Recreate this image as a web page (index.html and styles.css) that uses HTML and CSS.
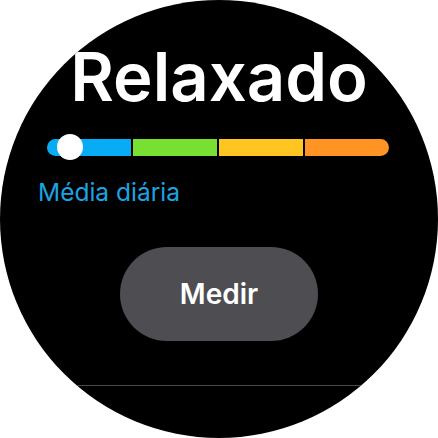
FILE: index.html
```html
<!DOCTYPE html>
<html lang="pt">
<head>
<meta charset="utf-8">
<link rel="stylesheet" href="styles.css">
</head>
<body>
<div class="watch">
  <h1 class="title">Relaxado</h1>
  <div class="scale">
    <div class="bar">
      <span class="seg seg-blue"></span>
      <span class="seg seg-green"></span>
      <span class="seg seg-yellow"></span>
      <span class="seg seg-orange"></span>
    </div>
    <span class="thumb"></span>
  </div>
  <div class="caption">Média diária</div>
  <div class="action">
    <button class="btn">Medir</button>
  </div>
  <div class="divider"></div>
</div>
</body>
</html>
```
FILE: styles.css
```css
html, body {
  margin: 0;
  padding: 0;
  background: #ffffff;
}
.watch {
  width: 438px;
  height: 438px;
  border-radius: 50%;
  background: #000000;
  overflow: hidden;
  display: flex;
  flex-direction: column;
  padding-top: 43px;
  box-sizing: border-box;
  font-family: Inter, "Noto Sans", sans-serif;
}
.title {
  margin: 0;
  font-size: 67px;
  line-height: 67px;
  font-weight: 600;
  color: #ffffff;
  text-align: center;
  letter-spacing: 0;
}
.scale {
  position: relative;
  margin-top: 24px;
  margin-left: 47px;
  width: 342px;
  height: 26px;
  display: flex;
  align-items: center;
}
.bar {
  width: 100%;
  height: 17px;
  border-radius: 9px;
  overflow: hidden;
  display: flex;
  gap: 2px;
  background: #000;
}
.seg { flex: 1; }
.seg-blue { background: #08acf4; }
.seg-green { background: #77e032; }
.seg-yellow { background: #ffc520; }
.seg-orange { background: #ff9424; }
.thumb {
  position: absolute;
  left: 10px;
  top: 0;
  width: 26px;
  height: 26px;
  border-radius: 50%;
  background: #ffffff;
}
.caption {
  margin-top: 18px;
  padding-left: 38px;
  font-size: 24.5px;
  line-height: 28px;
  color: #1ba3e2;
}
.action {
  margin-top: 41px;
  display: flex;
  justify-content: center;
}
.btn {
  width: 198px;
  height: 94px;
  border: none;
  border-radius: 47px;
  background: #4e4d52;
  color: #ffffff;
  font-family: Inter, "Noto Sans", sans-serif;
  font-size: 28px;
  font-weight: 600;
  padding: 0;
}
.divider {
  margin-top: 44px;
  height: 1px;
  background: #4a4a4a;
}
```
